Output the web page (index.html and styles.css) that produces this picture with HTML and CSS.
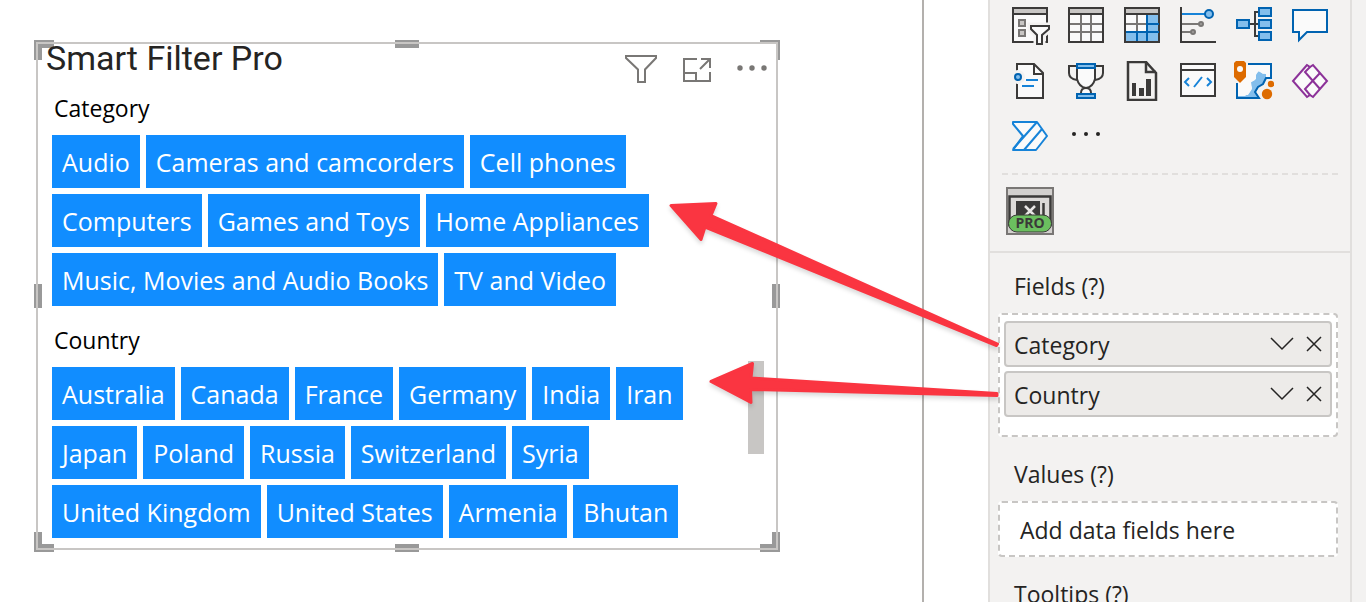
FILE: index.html
```html
<!DOCTYPE html>
<html lang="en">
<head>
<meta charset="utf-8">
<meta name="viewport" content="width=device-width, initial-scale=1">
<title>Smart Filter Pro</title>
<link rel="stylesheet" href="styles.css">
</head>
<body>
<div class="app">
  <main class="canvas">
    <section class="visual">
      <span class="handle handle-tl"></span><span class="handle handle-t"></span><span class="handle handle-tr"></span>
      <span class="handle handle-l"></span><span class="handle handle-r"></span>
      <span class="handle handle-bl"></span><span class="handle handle-b"></span><span class="handle handle-br"></span>
      <span class="frame"></span>
      <header class="visual-header">
        <h1 class="visual-title">Smart Filter Pro</h1>
        <div class="visual-actions">
          <button class="icon-button" type="button" aria-label="Filters">
            <svg width="32" height="28" viewBox="0 0 32 28" fill="none" stroke="#797775" stroke-width="2"><path d="M1 1H31V3L20 14.500V27H13V14.500L1 3Z"/></svg>
          </button>
          <button class="icon-button" type="button" aria-label="Focus mode">
            <svg width="28" height="28" viewBox="0 0 28 28" fill="none" stroke="#797775" stroke-width="2"><path d="M14 4H1V26H27V17M18 4H27V13M27 4L17 14M1 18H13V26"/></svg>
          </button>
          <button class="icon-button" type="button" aria-label="More options">
            <svg width="30" height="28" viewBox="0 0 30 28" fill="#797775"><circle cx="3" cy="13" r="2.700"/><circle cx="15" cy="13" r="2.700"/><circle cx="27" cy="13" r="2.700"/></svg>
          </button>
        </div>
      </header>
      <div class="group">
        <h2 class="group-title">Category</h2>
        <div class="chips">
          <div class="chip-row"><button class="chip" type="button">Audio</button><button class="chip" type="button">Cameras and camcorders</button><button class="chip" type="button">Cell phones</button></div>
          <div class="chip-row"><button class="chip" type="button">Computers</button><button class="chip" type="button">Games and Toys</button><button class="chip" type="button">Home Appliances</button></div>
          <div class="chip-row"><button class="chip" type="button">Music, Movies and Audio Books</button><button class="chip" type="button">TV and Video</button></div>
        </div>
      </div>
      <div class="group">
        <h2 class="group-title">Country</h2>
        <div class="chips">
          <div class="chip-row"><button class="chip" type="button">Australia</button><button class="chip" type="button">Canada</button><button class="chip" type="button">France</button><button class="chip" type="button">Germany</button><button class="chip" type="button">India</button><button class="chip" type="button">Iran</button></div>
          <div class="chip-row"><button class="chip" type="button">Japan</button><button class="chip" type="button">Poland</button><button class="chip" type="button">Russia</button><button class="chip" type="button">Switzerland</button><button class="chip" type="button">Syria</button></div>
          <div class="chip-row"><button class="chip" type="button">United Kingdom</button><button class="chip" type="button">United States</button><button class="chip" type="button">Armenia</button><button class="chip" type="button">Bhutan</button></div>
        </div>
        <span class="scroll-thumb"></span>
      </div>
    </section>
  </main>

  <aside class="pane">
    <div class="gallery">
      <button class="icon-button" type="button" aria-label="Slicer"><svg class="glyph" viewBox="0 0 40 40">
        <path d="M3 3H37V37H3Z" fill="#fafafa"/><path d="M3 3H37V9H3Z" fill="#c8c6c4"/><path d="M3 9H37M3 3H37V37H3Z" stroke="#3b3a39"/>
        <path d="M9 15h6v6H9ZM9 25h6v6H9Z" fill="#c8c6c4" stroke="#797775"/>
        <path d="M21 21H39V24L32 30V39H27V30L21 24Z" stroke="#f3f2f1" stroke-width="7"/><path d="M21 21H39V24L32 30V39H27V30L21 24Z" fill="#fafafa" stroke="#3b3a39"/></svg></button>
      <button class="icon-button" type="button" aria-label="Table"><svg class="glyph" viewBox="0 0 40 40">
        <path d="M3 3H37V37H3Z" fill="#fafafa"/><path d="M3 3H37V9H3Z" fill="#c8c6c4"/><path d="M15 9V37M25 9V37M3 19H37M3 27H37" stroke="#797775"/><path d="M3 9H37M3 3H37V37H3Z" stroke="#3b3a39"/></svg></button>
      <button class="icon-button" type="button" aria-label="Matrix"><svg class="glyph" viewBox="0 0 40 40">
        <path d="M3 3H37V37H3Z" fill="#fafafa"/><path d="M3 3H37V9H3Z" fill="#c8c6c4"/><path d="M25 9H37V37H3V27H25Z" fill="#83beec"/><path d="M15 9V27M3 19H25" stroke="#797775"/><path d="M3 9H37M3 3H37V37H3Z" stroke="#3b3a39"/><path d="M25 10V36M4 27H37M15 27V36M25 19H37" stroke="#0063b1"/></svg></button>
      <button class="icon-button" type="button" aria-label="Key influencers"><svg class="glyph" viewBox="0 0 40 40">
        <path d="M3 2V37H38" stroke="#3b3a39"/><path d="M4 9H27" stroke="#1683d8"/><path d="M4 19H21M4 27H13" stroke="#797775"/><circle cx="31" cy="9" r="4" fill="#83beec" stroke="#0063b1"/><g fill="#a19f9d" stroke="#797775"><circle cx="23" cy="19" r="2"/><circle cx="15" cy="27" r="2"/></g></svg></button>
      <button class="icon-button" type="button" aria-label="Decomposition tree"><svg class="glyph" viewBox="0 0 40 40">
        <path d="M16 19H24M24 7H21V31H24" stroke="#3b3a39"/><path d="M3 15H15V23H3ZM25 3H37V11H25ZM25 15H37V23H25ZM25 27H37V35H25Z" fill="#83beec" stroke="#0063b1"/></svg></button>
      <button class="icon-button" type="button" aria-label="Q and A"><svg class="glyph" viewBox="0 0 40 40">
        <path d="M3 5H37V27H17L9 35V27H3Z" fill="#fafafa" stroke="#0063b1"/></svg></button>

      <button class="icon-button" type="button" aria-label="Smart narrative"><svg class="glyph" viewBox="0 0 40 40">
        <path d="M7 3H24L33 12V37H7Z" fill="#fafafa" stroke="#3b3a39"/><path d="M24 3V13H33" stroke="#3b3a39"/><circle cx="8" cy="16" r="7" fill="#f3f2f1"/><circle cx="8" cy="16" r="3" fill="#83beec" stroke="#0063b1"/><path d="M16 19H28M12 25H24" stroke="#1683d8"/></svg></button>
      <button class="icon-button" type="button" aria-label="Metrics"><svg class="glyph" viewBox="0 0 40 40">
        <path d="M11 5H3V12Q3 18 11 19M29 5H37V12Q37 18 29 19" stroke="#3b3a39"/><path d="M15 32Q15 27 20 27Q25 27 25 32M11 8V18Q13 26 20 27Q27 26 29 18V8" fill="#fafafa" stroke="#3b3a39"/><path d="M11 3H29V7H11ZM11 33H29V37H11Z" fill="#83beec" stroke="#0063b1"/></svg></button>
      <button class="icon-button" type="button" aria-label="Paginated report"><svg class="glyph" viewBox="0 0 40 40">
        <path d="M6 1H24L34 12V39H6Z" fill="#f3f2f1" stroke="#3b3a39" stroke-width="2.500"/><path d="M24 1V11H34" stroke="#3b3a39" stroke-width="2.500"/><path d="M10 22h4v13h-4ZM17 27h5v8h-5ZM24 18h5v17h-5Z" fill="#3b3a39"/></svg></button>
      <button class="icon-button" type="button" aria-label="Script visual"><svg class="glyph" viewBox="0 0 40 40">
        <path d="M3 3H37V35H3ZM3 9H37" fill="#fafafa" stroke="#3b3a39"/><path d="M11 17L7 21L11 25M29 17L33 21L29 25M24 16L16 26" stroke="#1683d8"/></svg></button>
      <button class="icon-button" type="button" aria-label="ArcGIS map"><svg class="glyph" viewBox="0 0 40 40">
        <path d="M14 3H37V17L32 18L30 23L25 26L23 31L24 37H3V23Z" fill="#fafafa"/>
        <path d="M14 4H36V16H32V12L29 13L25 10L22 13V18L16 22L18 27L15 32L11 35H4V37H24L22 31L25 25L29 22L32 17H37V3H14Z" fill="#83beec"/>
        <path d="M35 6V13L31 13L28 12L24 10L22 14L21 19L17 21L18 28L14 34H5V23L14 17V6Z" fill="#fafafa"/>
        <path d="M14 3H37V17H32L29 23L24 26L21 31L25 37H3V22" stroke="#0063b1"/>
        <path d="M0 2L2 0H10L12 2V16L6 22L0 16Z" fill="#dd6b00"/><circle cx="6" cy="8" r="3" fill="#fafafa"/><circle cx="37" cy="23" r="3.200" fill="#dd6b00"/><circle cx="33" cy="33" r="5.200" fill="#dd6b00"/></svg></button>
      <button class="icon-button" type="button" aria-label="Power Apps"><svg class="glyph" viewBox="0 0 40 40">
        <path d="M17 4L3 20L17 36L20 34L23 36L37 20L23 4L20 6Z" fill="#fafafa" stroke="#8c3299"/><path d="M20 6L15 11L30 28M30 12L15 28L20 34" stroke="#8c3299"/></svg></button>

      <button class="icon-button" type="button" aria-label="Power Automate"><svg class="glyph" viewBox="0 0 40 40">
        <path d="M3 5H27L37 19L26 33H3L13 19L3 7Z" fill="#fafafa" stroke="#1683d8" stroke-linejoin="round"/><path d="M27 5L3 32M32 12L14 33" stroke="#1683d8"/></svg></button>
      <button class="icon-button" type="button" aria-label="Get more visuals"><svg class="glyph" viewBox="0 0 40 40"><g fill="#252423"><circle cx="8" cy="17" r="2"/><circle cx="20" cy="17" r="2"/><circle cx="32" cy="17" r="2"/></g></svg></button>
    </div>

    <div class="custom-visuals">
      <button class="icon-button" type="button" aria-label="Smart Filter Pro visual">
        <svg width="48" height="48" viewBox="0 0 48 48" fill="none">
          <path d="M1 1H47V47H1Z" fill="#d2d0ce" stroke="#797775" stroke-width="2"/>
          <path d="M3.500 9.500H44.500V38H3.500Z" fill="#dcdad8" stroke="#3b3a39" stroke-width="2.500"/>
          <path d="M10 14H34V32H10Z" fill="#3b3a39"/><path d="M37.500 16V30" stroke="#3b3a39" stroke-width="2.500"/>
          <path d="M19 19L29 29M29 19L19 29" stroke="#e8e6e4" stroke-width="2.500"/>
          <rect x="2.500" y="28" width="43" height="17" rx="8.500" fill="#6bbf5f" stroke="#3b3a39"/>
          <text class="badge-text" x="24" y="41" text-anchor="middle">PRO</text>
        </svg>
      </button>
    </div>

    <div class="wells">
      <section class="well">
        <h3 class="well-title">Fields (?)</h3>
        <div class="drop-zone drop-zone-filled">
          <div class="field"><span class="field-name">Category</span>
            <button class="icon-button" type="button" aria-label="Category options"><svg width="24" height="18" viewBox="0 0 24 18" class="field-glyph"><path d="M1 3L12 14L23 3"/></svg></button>
            <button class="icon-button" type="button" aria-label="Remove Category"><svg width="16" height="18" viewBox="0 0 16 18" class="field-glyph"><path d="M1 2L15 16M15 2L1 16"/></svg></button></div>
          <div class="field"><span class="field-name">Country</span>
            <button class="icon-button" type="button" aria-label="Country options"><svg width="24" height="18" viewBox="0 0 24 18" class="field-glyph"><path d="M1 3L12 14L23 3"/></svg></button>
            <button class="icon-button" type="button" aria-label="Remove Country"><svg width="16" height="18" viewBox="0 0 16 18" class="field-glyph"><path d="M1 2L15 16M15 2L1 16"/></svg></button></div>
        </div>
      </section>
      <section class="well">
        <h3 class="well-title">Values (?)</h3>
        <div class="drop-zone drop-zone-empty">Add data fields here</div>
      </section>
      <section class="well">
        <h3 class="well-title">Tooltips (?)</h3>
      </section>
    </div>
  </aside>

  <svg class="arrows" width="1366" height="602" viewBox="0 0 1366 602" fill="#fa3541" stroke="#fa3541" stroke-width="3" stroke-linejoin="round" aria-hidden="true">
    <path d="M671 205.500L716 203.500L711 215.500L997.500 344L996.500 345.500L705 227L701 239.500Z"/>
    <path d="M711 381.500L752.500 363.500L751 378L997 393.500V395.500L750.500 389.500L751 402.500Z"/>
  </svg>
</div>
</body>
</html>
```
FILE: styles.css
```css
* {
  box-sizing: border-box;
}

body {
  margin: 0;
  font-family: "Open Sans", "Noto Sans", sans-serif;
  color: #252423;
  background: #fff;
}

h1,
h2,
h3 {
  margin: 0;
  font-weight: 400;
}

button {
  font: inherit;
  border: 0;
  cursor: pointer;
}

.app {
  position: relative;
  display: flex;
  height: 100vh;
  overflow: hidden;
}

.canvas {
  flex: 1;
  margin-right: 64px;
  padding: 42px 144px 0 36px;
  border-right: 2px solid #b3b0ad;
}

/* Selected visual */
.visual {
  position: relative;
  padding: 2px 2px 12px;
}

.frame {
  position: absolute;
  inset: 0;
  border: 2px solid #c8c6c4;
  pointer-events: none;
}

.handle {
  position: absolute;
  width: 20px;
  height: 20px;
  border: 0 solid #999;
}

.handle-tl { top: -2px; left: -2px; border-width: 8px 0 0 8px; }
.handle-tr { top: -2px; right: -2px; border-width: 3px 3px 0 0; }
.handle-bl { bottom: -2px; left: -2px; border-width: 0 0 8px 8px; }
.handle-br { bottom: -2px; right: -2px; border-width: 0 8px 8px 0; }

.handle-t,
.handle-b {
  left: calc(50% - 12px);
  width: 24px;
  height: 8px;
  background: #999;
}

.handle-l,
.handle-r {
  top: calc(50% - 12px);
  width: 8px;
  height: 24px;
  background: #999;
}

.handle-t { top: -2px; }
.handle-b { bottom: -2px; }
.handle-l { left: -2px; }
.handle-r { right: -2px; }

.visual-header {
  position: relative;
  display: flex;
  justify-content: space-between;
  align-items: flex-start;
  height: 50px;
  padding: 0 9px 0 8px;
}

.visual-title {
  font-family: Roboto, sans-serif;
  font-size: 34px;
  line-height: 28px;
}

.visual-actions {
  display: flex;
  gap: 26px;
  padding-top: 11px;
}

.icon-button {
  display: flex;
  padding: 0;
  background: none;
}

.group {
  position: relative;
  padding: 0 14px;
}

.group + .group {
  margin-top: 20px;
}

.group-title {
  margin-bottom: 13px;
  padding-left: 2px;
  font-size: 23px;
  line-height: 28px;
  color: #000;
}

.chips {
  display: flex;
  flex-direction: column;
  gap: 6px;
}

.chip-row {
  display: flex;
  gap: 6px;
}

.chip {
  height: 53px;
  padding: 0 10px;
  font-size: 25px;
  line-height: 36px;
  white-space: nowrap;
  color: #fff;
  background: #118dff;
}

.scroll-thumb {
  position: absolute;
  top: 35px;
  right: 12px;
  width: 16px;
  height: 93px;
  background: #c8c6c4;
}

/* Visualizations pane */
.pane {
  flex: none;
  width: 378px;
  padding-right: 14px;
  background: linear-gradient(to left, #f3f2f1 14px, #e1dfdd 14px, #e1dfdd 16px, #f3f2f1 16px);
  border-left: 2px solid #e1dfdd;
}

.gallery {
  display: grid;
  grid-template-columns: repeat(6, 40px);
  gap: 16px;
  padding: 5px 20px 16px;
}

.glyph {
  width: 40px;
  height: 40px;
  fill: none;
  stroke-width: 2;
}

.custom-visuals {
  margin: 0 14px 0 12px;
  padding: 14px 4px 16px;
  background: repeating-linear-gradient(to right, #e1dfdd 0, #e1dfdd 6px, transparent 6px, transparent 10px) top / 100% 2px no-repeat;
}

.badge-text {
  font-family: "Open Sans", sans-serif;
  font-size: 14px;
  font-weight: 700;
  fill: #3b3a39;
}

.wells {
  display: flex;
  flex-direction: column;
  gap: 22px;
  margin-right: 2px;
  padding: 18px 12px 0 8px;
  border-top: 2px solid #e1dfdd;
}

.well-title {
  margin-bottom: 12px;
  padding-left: 16px;
  font-size: 23px;
  line-height: 30px;
}

.drop-zone {
  background: #fff;
  border: 2px dashed #c8c6c4;
  border-radius: 4px;
}

.drop-zone-filled {
  display: flex;
  flex-direction: column;
  gap: 4px;
  padding: 6px 4px 18px;
}

.drop-zone-empty {
  padding: 11px 20px 9px;
  font-size: 23px;
  line-height: 32px;
}

.field {
  display: flex;
  align-items: center;
  gap: 12px;
  height: 46px;
  padding: 0 8px;
  font-size: 23px;
  background: #edebe9;
  border: 2px solid #c8c6c4;
  border-radius: 4px;
}

.field-name {
  flex: 1;
  padding-top: 2px;
}

.field-glyph {
  fill: none;
  stroke: #252423;
  stroke-width: 1.5;
}

/* Callout arrows over the canvas */
.arrows {
  position: absolute;
  top: 0;
  left: 0;
  pointer-events: none;
  filter: drop-shadow(0 3px 2px rgba(0, 0, 0, 0.15));
}
```
